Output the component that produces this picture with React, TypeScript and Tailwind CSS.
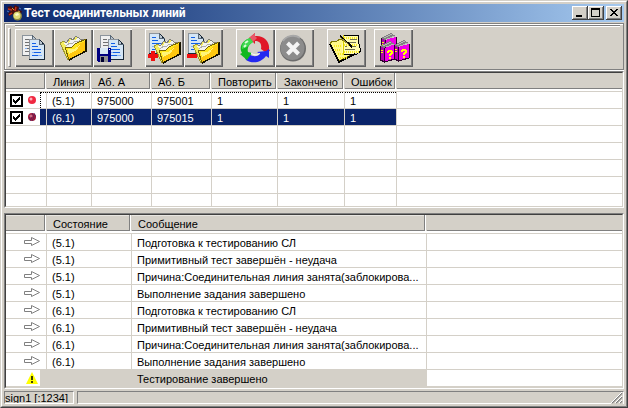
import type { ReactNode } from "react";

type Line = { line: string; a: string; b: string; repeat: number; done: number; errors: number; selected?: boolean };
type Message = { state: string; text: string };

const lines: Line[] = [
  { line: "(5.1)", a: "975000", b: "975001", repeat: 1, done: 1, errors: 1 },
  { line: "(6.1)", a: "975000", b: "975015", repeat: 1, done: 1, errors: 1, selected: true },
];

const messages: Message[] = ["(5.1)", "(6.1)"].flatMap((state) => [
  { state, text: "Подготовка к тестированию СЛ" },
  { state, text: "Примитивный тест завершён - неудача" },
  { state, text: "Причина:Соединительная линия занята(заблокирова..." },
  { state, text: "Выполнение задания завершено" },
]);

function Icon({ children }: { children: ReactNode }) {
  return (
    <svg width="39" height="38" viewBox="0 0 39 38" aria-hidden="true" shapeRendering="crispEdges">
      {children}
    </svg>
  );
}

function Page({ x, y, blue }: { x: number; y: number; blue?: boolean }) {
  const ink = blue ? "#1060e8" : "#707070";
  return (
    <g transform={`translate(${x} ${y})`}>
      <path d="M0 0H10L16 6V21H0Z" fill={blue ? "#d4e6f6" : "#f0f0f0"} />
      <path d="M0.500 21V0.500H10" fill="none" stroke="#8c949c" />
      <path d="M10 0V6H16Z" fill="#b8c4d0" />
      <path d="M10.500 0.500L15.500 6V20.500H0" fill="none" stroke={blue ? "#182838" : "#606870"} />
      <path d="M10.500 0V5.500H16" fill="none" stroke="#586878" />
      <path d="M3 4.500H7M3 7.500H9M3 10.500H12M5 13.500H12M3 16.500H9" stroke={ink} />
      <path d="M9 16.500H13M3 13.500H5" stroke="#80b0f8" />
    </g>
  );
}

function Folder({ x, y }: { x: number; y: number }) {
  return (
    <g transform={`translate(${x} ${y})`}>
      <path d="M0 7L4 5L6 7L10 2L13 4L16 0L20 3L25 3L9 24H8Z" fill="#f4ec60" />
      <path d="M8 24L0 7L4 5" fill="none" stroke="#a09830" />
      <path d="M4 7L7 6L9 7L12 2L15 4L18 1L21 4L23 3L22 8L8 13Z" fill="#f4f4f0" />
      <path d="M4 5L6 7L10 2L13 4L16 0L20 3L25 4" fill="none" stroke="#808078" />
      <path d="M6 10L10 7L12 8L15 5L18 6L20 4" fill="none" stroke="#b0b0a8" />
      <path d="M5 11H12L15 8L26 3V15L9 24Z" fill="#ffe820" />
      <path d="M18 9L26 4V15L9 24L8 20Z" fill="#ffc810" />
      <path d="M8 13L14 13L20 9L17 14L9 18Z" fill="#fff578" />
      <path d="M9 24L26 15V3" fill="none" stroke="#181400" strokeWidth="1.500" />
      <path d="M5 11L9 24M5 11H12L15 8L26 3" fill="none" stroke="#786400" />
    </g>
  );
}

const CopyIcon = () => (
  <Icon>
    <Page x={7} y={6} />
    <Page x={14} y={10} blue />
  </Icon>
);
const OpenIcon = () => (
  <Icon>
    <Folder x={6} y={7} />
  </Icon>
);
const SaveIcon = () => (
  <Icon>
    <Page x={7} y={6} />
    <Page x={15} y={10} blue />
    <path d="M4 19H18V33H5L4 32Z" fill="#000080" />
    <path d="M7 19H15V25H7Z" fill="#d8e8f4" />
    <path d="M7 27H15V33H7Z" fill="#909090" />
    <path d="M8 28H11V33H8Z" fill="#000030" />
    <path d="M16 20H17V21H16Z" fill="#ffffff" />
  </Icon>
);
const AddIcon = () => (
  <Icon>
    <Page x={4} y={4} blue />
    <Folder x={9} y={10} />
    <path d="M6 22H10V25H13V29H10V32H6V29H3V25H6Z" fill="#f01010" />
  </Icon>
);
const RemoveIcon = () => (
  <Icon>
    <Page x={4} y={4} blue />
    <Folder x={9} y={10} />
    <path d="M3 25H13V29H3Z" fill="#f01010" />
  </Icon>
);
const RunIcon = () => (
  <Icon>
    <g shapeRendering="auto">
      <path d="M13 9L19 4V7C28 6 34 13 33 20L34 22L29 23L25 20C26 14 23 12 19 12V15Z" fill="#e01828" />
      <path d="M13 9L19 4V7L21 9L17 13Z" fill="#e85868" />
      <path d="M33 20V29L30 27C25 34 16 35 10 31L9 29L13 25C17 28 21 28 24 25L21 23L30 22Z" fill="#2428f0" />
      <path d="M14 9C5 12 3 19 6 24L4 25L11 31L13 28L16 24L12 23C11 19 13 15 17 13Z" fill="#10b820" />
      <path d="M14 9C8 11 5 16 6 20L11 18L17 13Z" fill="#40d850" />
      <path d="M9 14L12 12M8 18L10 16" stroke="#d8ffd8" strokeWidth="2" />
      <path d="M15 24C19 27 22 26 24 24" fill="none" stroke="#ffffff" />
    </g>
  </Icon>
);
const StopIcon = () => (
  <Icon>
    <g shapeRendering="auto">
      <circle cx="18" cy="19.500" r="13" fill="#6c6c6c" />
      <circle cx="17.500" cy="19" r="12" fill="#8c8c8c" />
      <path d="M8 12C11 7 19 5 25 9" stroke="#a8a8a8" strokeWidth="2" fill="none" />
      <path d="M12.500 14L23.500 25M23.500 14L12.500 25" stroke="#f4f4f4" strokeWidth="4" />
    </g>
  </Icon>
);
const NotesIcon = () => (
  <Icon>
    <path d="M3 15L5 12L9 13L13 10L17 12L26 25L12 32Z" fill="#fff888" stroke="#807800" />
    <path d="M3 15L12 33L28 25" fill="none" stroke="#000000" strokeWidth="1.500" />
    <path d="M16 6H32L31 10L34 22L30 24L16 26L15 22Z" fill="#fffbb0" />
    <path d="M16 6H32L31 12L34 22L30 25L16 26" fill="none" stroke="#000000" />
    <path d="M16 26V6" stroke="#d8cc00" />
    <path d="M23 10.500H30M21 13.500H29M18 17.500H20M25 17.500H29M18 20.500H28" stroke="#707050" />
    <path
      d="M17 8.500H30M17 15.500H30M17 22.500H32M7 16.500H14M8 20.500H14M11 24.500H16M13 28.500H20"
      stroke="#f8ec20"
      strokeWidth="2"
      strokeDasharray="1 1"
    />
    <path d="M13 7L25 18" stroke="#000000" strokeWidth="2" />
    <path d="M13 8L22 16" stroke="#908830" />
  </Icon>
);

function Book({ x, y, mark }: { x: number; y: number; mark?: boolean }) {
  return (
    <g transform={`translate(${x} ${y})`}>
      <path d="M0 5L4 7V21L0 19Z" fill="#b000b0" />
      <path d="M4 7L15 4V18L4 21Z" fill="#f000e8" />
      <path d="M0 5L10 0L15 3L4 7Z" fill="#808080" />
      <path d="M3 5L11 1M6 6L14 3" stroke="#b8b8b8" />
      <path d="M4.500 7V21M0.500 5V19L4.500 21L15 18V4" fill="none" stroke="#300030" />
      <path d="M1 9H3V10H1ZM1 11H3V12H1Z" fill="#ffff00" />
      {mark && (
        <path d="M8 9H12V10H13V13H12V14H11V15H9V13H10V12H11V11H9V12H7V10H8ZM9 16H11V18H9Z" fill="#ffff00" />
      )}
    </g>
  );
}
const HelpIcon = () => (
  <Icon>
    <Book x={7} y={4} />
    <Book x={6} y={12} mark />
    <Book x={20} y={11} mark />
  </Icon>
);

function AppIcon() {
  return (
    <svg width="16" height="16" viewBox="0 0 16 16" aria-hidden="true">
      <path d="M0 2L4 1L6 3L8 0L12 2L11 5L15 6L14 9L6 9L2 11L1 8L4 6Z" fill="#481010" />
      <path d="M1 4L5 5M9 2L8 6M5 8L2 10" stroke="#c83018" strokeWidth="1.500" />
      <path d="M5 3L7 5M11 6L13 7" stroke="#d8a030" />
      <path d="M0 6L2 7M12 3L14 4" stroke="#5078c0" />
      <circle cx="10.500" cy="11" r="4.500" fill="#8c8840" />
      <circle cx="10" cy="10.500" r="3.500" fill="#e0dc78" />
      <path d="M8 9L11 8L12 10L9 11Z" fill="#fcfcd0" />
    </svg>
  );
}

const tools: { label: string; icon: ReactNode }[][] = [
  [
    { label: "Копировать", icon: <CopyIcon /> },
    { label: "Открыть", icon: <OpenIcon /> },
    { label: "Сохранить", icon: <SaveIcon /> },
  ],
  [
    { label: "Добавить", icon: <AddIcon /> },
    { label: "Удалить", icon: <RemoveIcon /> },
  ],
  [
    { label: "Запустить", icon: <RunIcon /> },
    { label: "Остановить", icon: <StopIcon /> },
  ],
];

function ToolButton({ label, icon }: { label: string; icon: ReactNode }) {
  return (
    <button
      type="button"
      aria-label={label}
      className="block h-[38px] w-[39px] shadow-[inset_1px_1px_#fff,inset_-1px_-1px_#606060,inset_-2px_-2px_#808080]"
    >
      {icon}
    </button>
  );
}

function CaptionButton({ label, d }: { label: string; d: string }) {
  return (
    <button
      type="button"
      aria-label={label}
      className="h-[14px] w-4 bg-[#d4d0c8] shadow-[inset_-1px_-1px_#404040,inset_1px_1px_#fff,inset_-2px_-2px_#808080]"
    >
      <svg width="16" height="14" viewBox="0 0 16 14" shapeRendering="crispEdges" aria-hidden="true">
        <path d={d} fill="#000000" fillRule="evenodd" />
      </svg>
    </button>
  );
}

function Head({ children }: { children?: ReactNode }) {
  return (
    <th className="border-b border-[#d4d0c8] bg-white p-0 pb-[2px] text-left font-normal">
      <div className="h-4 border-r border-[#d4d0c8] bg-[#d4d0c8] pl-[6px] leading-[18px] whitespace-nowrap shadow-[inset_-1px_0_#fff,inset_-2px_-1px_#808080,inset_0_1px_#e8e6e2]">
        {children}
      </div>
    </th>
  );
}

function LastHead() {
  return (
    <th className="border-b border-[#d4d0c8] bg-white p-0 pb-[2px]">
      <div className="h-4 border-b border-[#808080] bg-[#d4d0c8]" />
    </th>
  );
}

const cell = "h-[17px] border-r border-b border-[#d4d0c8] p-0 pt-[2px] pl-[5px] leading-[14px] whitespace-nowrap";
const lastCell = "h-[17px] border-b border-[#d4d0c8] p-0";
const focusTop = " bg-[repeating-linear-gradient(90deg,#000_0_1px,#fff_1px_2px)] bg-[length:100%_1px] bg-no-repeat";

function LineRow({ item }: { item: Line }) {
  const id = `line-${item.line}`;
  const look = item.selected ? " bg-[#0a246a] text-white" : focusTop;
  const values = [item.line, item.a, item.b, item.repeat, item.done, item.errors];
  return (
    <tr>
      <td className="h-[17px] border-r border-b border-[#d4d0c8] p-0">
        <div className="flex h-4 items-center pl-1">
          <label htmlFor={id} className="grid">
            <input
              id={id}
              type="checkbox"
              defaultChecked
              aria-label={`Линия ${item.line}`}
              className="peer col-start-1 row-start-1 m-0 size-[13px] appearance-none border-2 border-black bg-white"
            />
            <svg
              width="13"
              height="13"
              viewBox="0 0 13 13"
              className="pointer-events-none invisible col-start-1 row-start-1 peer-checked:visible"
              shapeRendering="crispEdges"
              aria-hidden="true"
            >
              <path d="M3 5H4V6H5V7H6V6H7V5H8V4H9V3H10V6H9V7H8V8H7V9H6V10H5V9H4V8H3Z" fill="#000000" />
            </svg>
          </label>
          <svg width="8" height="8" viewBox="0 0 8 8" className="ml-[5px]" aria-hidden="true">
            <circle cx="4" cy="4" r="4" fill={item.selected ? "#a01838" : "#f02840"} />
            <circle cx="3" cy="3" r="1.500" fill={item.selected ? "#c87088" : "#ffb0b8"} />
            {item.selected && <path d="M1 5H7M2 7H6M4 1H7M5 3H8" stroke="#302870" strokeWidth="1" strokeDasharray="1 1" />}
          </svg>
          <div
            className={
              item.selected
                ? "ml-auto h-4 w-[6px] bg-[#0a246a]"
                : "ml-auto h-4 w-[6px] border-t border-l border-dotted border-black"
            }
          />
        </div>
      </td>
      {values.map((value, i) => (
        <td key={i} className={cell + look}>
          {value}
        </td>
      ))}
      <td className={lastCell} />
    </tr>
  );
}

function EmptyRow({ last }: { last?: boolean }) {
  return (
    <tr>
      {[0, 1, 2, 3, 4, 5, 6].map((i) => (
        <td key={i} className={last ? "h-3 border-r border-[#d4d0c8] p-0" : cell} />
      ))}
      <td className={last ? "h-3 p-0" : lastCell} />
    </tr>
  );
}

const sunken = "border border-t-[#808080] border-l-[#808080] border-r-white border-b-white";
const well = "border border-t-[#404040] border-l-[#404040] border-r-[#d4d0c8] border-b-[#d4d0c8] bg-white";

export default function App() {
  return (
    <main className="flex min-h-screen flex-col border border-t-[#d4d0c8] border-r-[#404040] border-b-[#404040] border-l-[#d4d0c8] bg-[#d4d0c8] font-['Liberation_Sans',Arial,sans-serif] text-[11px] text-black">
      <div className="flex grow flex-col border border-t-white border-r-[#808080] border-b-[#808080] border-l-white p-[2px]">
        <header className="flex h-[18px] items-center bg-linear-to-r from-[#0a246a] to-[#a6caf0] pr-[2px] pl-[3px]">
          <AppIcon />
          <h1 className="ml-px grow font-[Roboto,'Liberation_Sans',sans-serif] text-[12px] leading-[18px] font-bold whitespace-nowrap text-white">
            Тест соединительных линий
          </h1>
          <CaptionButton label="Свернуть" d="M4 9H10V11H4Z" />
          <CaptionButton label="Развернуть" d="M3 2H12V11H3ZM4 4V10H11V4Z" />
          <div className="ml-[2px] flex">
            <CaptionButton
              label="Закрыть"
              d="M4 3H6V4H7V5H9V4H10V3H12V4H11V5H10V6H9V7H10V8H11V9H12V10H10V9H9V8H7V9H6V10H4V9H5V8H6V7H7V6H6V5H5V4H4Z"
            />
          </div>
        </header>

        <div className="mt-px border border-[#808080] shadow-[0_1px_#fff]">
          <div className="flex h-[45px] border-t border-l border-white pl-[2px]">
            <div className="mt-[3px] mr-1 h-[39px] w-[3px] border border-t-white border-r-[#808080] border-b-[#808080] border-l-white" />
            <div className="mr-[3px] grow border-t border-[#808080] shadow-[inset_0_1px_#fff]">
              <div role="toolbar" aria-label="Панель инструментов" className="mt-[3px] flex gap-[13px]">
                {tools.map((group, i) => (
                  <div key={i} className="flex">
                    {group.map((tool) => (
                      <ToolButton key={tool.label} {...tool} />
                    ))}
                  </div>
                ))}
                <div className="flex gap-2">
                  <ToolButton label="Журнал" icon={<NotesIcon />} />
                  <ToolButton label="Справка" icon={<HelpIcon />} />
                </div>
              </div>
            </div>
          </div>
        </div>

        <section aria-label="Линии" className={"mt-px " + sunken}>
          <div className={well}>
            <table className="w-full table-fixed border-separate border-spacing-0">
              <colgroup>
                <col className="w-[41px]" />
                <col className="w-[45px]" />
                <col className="w-[60px]" />
                <col className="w-[60px]" />
                <col className="w-[66px]" />
                <col className="w-[67px]" />
                <col className="w-[52px]" />
                <col />
              </colgroup>
              <thead>
                <tr>
                  <Head />
                  <Head>Линия</Head>
                  <Head>Аб. А</Head>
                  <Head>Аб. Б</Head>
                  <Head>Повторить</Head>
                  <Head>Закончено</Head>
                  <Head>Ошибок</Head>
                  <LastHead />
                </tr>
              </thead>
              <tbody>
                {lines.map((item) => (
                  <LineRow key={item.line} item={item} />
                ))}
                <EmptyRow />
                <EmptyRow />
                <EmptyRow />
                <EmptyRow />
                <EmptyRow last />
              </tbody>
            </table>
          </div>
        </section>

        <section aria-label="Сообщения" className={"mt-[5px] flex grow flex-col " + sunken}>
          <div className={"grow " + well}>
            <table className="w-full table-fixed border-separate border-spacing-0">
              <colgroup>
                <col className="w-[41px]" />
                <col className="w-[85px]" />
                <col className="w-[295px]" />
                <col />
              </colgroup>
              <thead>
                <tr>
                  <Head />
                  <Head>Состояние</Head>
                  <Head>Сообщение</Head>
                  <LastHead />
                </tr>
              </thead>
              <tbody>
                {messages.map((message, i) => (
                  <tr key={i}>
                    <td className="h-[17px] border-r border-b border-[#d4d0c8] p-0 pl-[18px]">
                      <svg width="17" height="11" viewBox="0 0 17 11" className="block" aria-hidden="true">
                        <path d="M0.500 3.500H7.500V0.500L15.500 4.500L7.500 8.500V6.500H0.500Z" fill="#ffffff" stroke="#808080" />
                      </svg>
                    </td>
                    <td className={cell}>{message.state}</td>
                    <td className={cell}>{message.text}</td>
                    <td className={lastCell} />
                  </tr>
                ))}
                <tr>
                  <td className="h-[17px] border-r border-b border-[#d4d0c8] p-0">
                    <div className="flex h-4 items-center">
                      <svg width="12" height="12" viewBox="0 0 12 12" className="ml-5" aria-hidden="true">
                        <path d="M6 0L12 12H0Z" fill="#ffff00" />
                        <path d="M6 4V8M6 9V11" stroke="#000000" strokeWidth="1.500" />
                      </svg>
                      <div className="ml-auto h-4 w-[6px] bg-[#d4d0c8]" />
                    </div>
                  </td>
                  <td className={cell + " bg-[#d4d0c8]"} />
                  <td className={cell + " bg-[#d4d0c8]"}>Тестирование завершено</td>
                  <td className={lastCell} />
                </tr>
              </tbody>
            </table>
          </div>
        </section>

        <footer className="mt-[2px] flex h-[13px] gap-[3px]">
          <div className={"w-[70px] overflow-hidden leading-[13px] whitespace-nowrap " + sunken}>sign1 [:1234]</div>
          <div className={"flex grow items-end justify-end " + sunken}>
            <svg width="12" height="12" viewBox="0 0 12 12" className="-mb-px bg-[#d4d0c8]" aria-hidden="true">
              <path d="M1 11L11 1M5 11L11 5M9 11L11 9" stroke="#808080" strokeWidth="1.500" />
              <path d="M0 11L11 0M4 11L11 4M8 11L11 8" stroke="#ffffff" />
            </svg>
          </div>
        </footer>
      </div>
    </main>
  );
}
